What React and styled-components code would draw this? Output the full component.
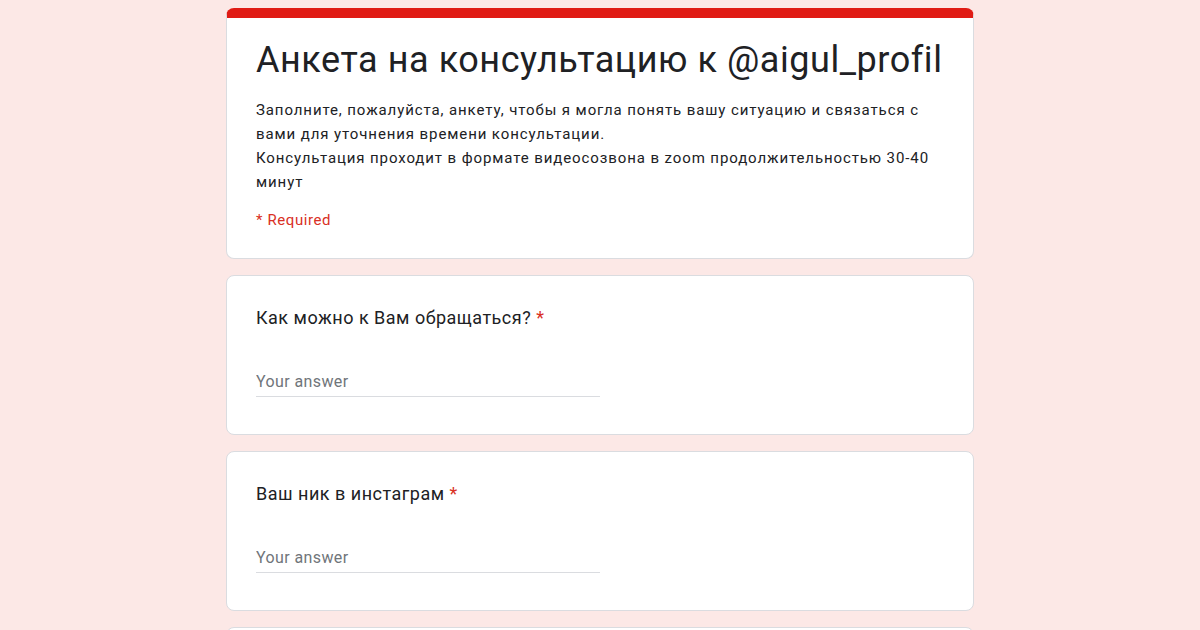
import React from 'react'
import styled, { createGlobalStyle } from 'styled-components'

const questions = [
  { id: 1, label: 'Как можно к Вам обращаться?' },
  { id: 2, label: 'Ваш ник в инстаграм' },
  { id: 3, label: 'Сколько Вам лет?' },
]

function App() {
  return (
    <>
      <Global />
      <Page>
        <HeaderCard>
          <Title>Анкета на консультацию к @aigul_profil</Title>
          <Description>
            Заполните, пожалуйста, анкету, чтобы я могла понять вашу ситуацию и связаться с
            вами для уточнения времени консультации.
            <br />
            Консультация проходит в формате видеосозвона в zoom продолжительностью 30-40
            минут
          </Description>
          <Required>* Required</Required>
        </HeaderCard>

        {questions.map(q => (
          <Card key={q.id}>
            <Question>
              {q.label} <Star>*</Star>
            </Question>
            <Answer placeholder="Your answer" />
          </Card>
        ))}
      </Page>
    </>
  )
}

export default App

const Global = createGlobalStyle`
  html, body {
    margin: 0;
    background: #fce8e6;
    font-family: Roboto, "Noto Sans", sans-serif;
    color: #202124;
  }
`

const Page = styled.div`
  width: 748px;
  margin: 0 auto;
  padding-top: 8px;
  display: flex;
  flex-direction: column;
  gap: 16px;
`

const Card = styled.div`
  background: #fff;
  border: 1px solid #dadce0;
  border-radius: 8px;
  padding: 30px 29px 37px;
  display: flex;
  flex-direction: column;
  gap: 38px;
`

const HeaderCard = styled(Card)`
  border-top: 10px solid #e01b14;
  padding: 18px 29px 26px;
  gap: 0;
`

const Title = styled.div`
  font-size: 36px;
  line-height: 48px;
  letter-spacing: 0.55px;
  color: #202124;
  margin-bottom: 14px;
`

const Description = styled.div`
  font-size: 15px;
  line-height: 24px;
  letter-spacing: 0.9px;
  color: #202124;
`

const Required = styled.div`
  font-size: 15px;
  line-height: 24px;
  letter-spacing: 0.6px;
  color: #d93025;
  margin-top: 14px;
`

const Question = styled.div`
  font-size: 18px;
  line-height: 24px;
  letter-spacing: 0.5px;
  color: #202124;
`

const Star = styled.span`
  color: #d93025;
`

const Answer = styled.input`
  width: 344px;
  border: none;
  border-bottom: 1px solid #dadce0;
  outline: none;
  padding: 4px 0 5px;
  font-family: Roboto, "Noto Sans", sans-serif;
  font-size: 16px;
  letter-spacing: 0.4px;
  color: #202124;
  &::placeholder {
    color: #70757a;
  }
`
